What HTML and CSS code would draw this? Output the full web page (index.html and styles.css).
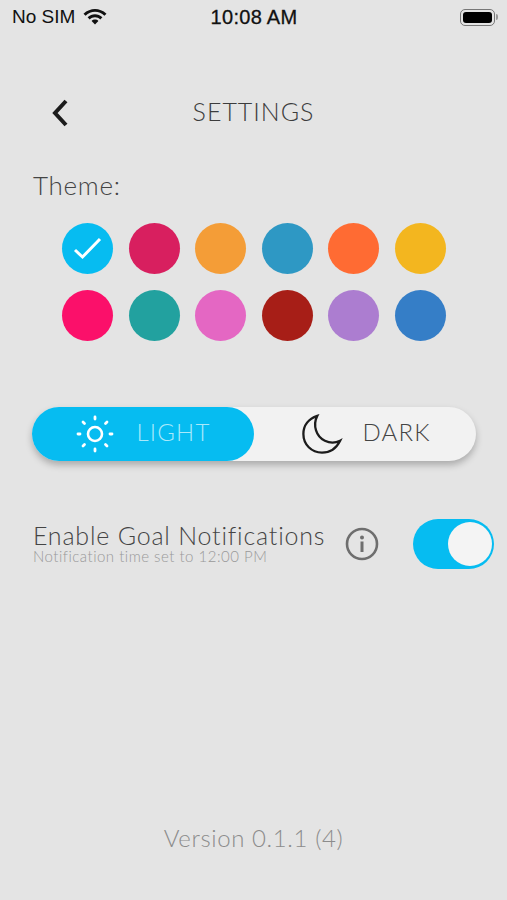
FILE: index.html
```html
<!DOCTYPE html>
<html lang="en">
<head>
    <meta charset="UTF-8">
    <meta name="viewport" content="width=device-width, initial-scale=1.0">
    <title>Settings</title>
    <link rel="stylesheet" href="styles.css">
</head>
<body>
    <div class="page">
        <div class="status-bar">
            <div class="status-left">
                <span>No SIM</span>
                <svg class="wifi" width="24" height="18" viewBox="0 0 24 18">
                    <path d="M12 1C8 1 4 2.500 .5 5.700L2.600 7.800C5.200 5.300 8.500 3.800 12 3.800S18.800 5.300 21.400 7.800L23.500 5.700C20 2.500 16 1 12 1Z"/>
                    <path d="M12 6.300C9.300 6.300 6.800 7.400 4.600 9.300L6.700 11.400C8.200 10 10 9.200 12 9.200S15.800 10 17.300 11.400L19.400 9.300C17.200 7.400 14.700 6.300 12 6.300Z"/>
                    <path d="M12 11.500C10.700 11.500 9.500 12 8.600 12.900L12 16.500L15.400 12.900C14.500 12 13.300 11.500 12 11.500Z"/>
                </svg>
            </div>
            <div class="status-time">10:08 AM</div>
            <div class="status-right">
                <div class="battery"><div class="battery-fill"></div></div>
                <div class="battery-cap"></div>
            </div>
        </div>

        <div class="header">
            <svg class="back" width="20" height="30" viewBox="0 0 20 30">
                <path d="M16 3L5 15L16 27" fill="none" stroke="#1c1c1c" stroke-width="4"/>
            </svg>
            <h1 class="title">SETTINGS</h1>
        </div>

        <p class="theme-label">Theme:</p>
        <div class="swatches">
            <div class="swatch selected">
                <svg width="30" height="26" viewBox="0 0 30 26">
                    <path d="M2 14L9.500 21L27 3" fill="none" stroke="#fff" stroke-width="3"/>
                </svg>
            </div>
            <div class="swatch crimson"></div>
            <div class="swatch amber"></div>
            <div class="swatch ocean"></div>
            <div class="swatch orange"></div>
            <div class="swatch yellow"></div>
            <div class="swatch rose"></div>
            <div class="swatch teal"></div>
            <div class="swatch orchid"></div>
            <div class="swatch brick"></div>
            <div class="swatch violet"></div>
            <div class="swatch blue"></div>
        </div>

        <div class="mode-switch">
            <div class="mode mode-light">
                <svg width="40" height="40" viewBox="0 0 40 40">
                    <circle cx="20" cy="20" r="7" fill="none" stroke="#fff" stroke-width="2.600"/>
                    <g stroke="#fff" stroke-width="2.800" stroke-linecap="round">
                        <path d="M20 3V5"/>
                        <path d="M20 35V37"/>
                        <path d="M3 20H5"/>
                        <path d="M35 20H37"/>
                        <path d="M8 8L9.500 9.500"/>
                        <path d="M30.500 30.500L32 32"/>
                        <path d="M8 32L9.500 30.500"/>
                        <path d="M30.500 9.500L32 8"/>
                    </g>
                </svg>
                <span>LIGHT</span>
            </div>
            <div class="mode mode-dark">
                <svg width="42" height="42" viewBox="0 0 44 44">
                    <path d="M17 3C8 6 2.500 13 2.500 22C2.500 33 11 41.500 22 41.500C30 41.500 37 37 41 29C36 31.500 30 31.500 25 29C16 25 12 13 17 3Z" fill="none" stroke="#1c1c1c" stroke-width="2.400"/>
                </svg>
                <span>DARK</span>
            </div>
        </div>

        <div class="notify-row">
            <div class="notify-text">
                <div class="notify-title">Enable Goal Notifications</div>
                <div class="notify-sub">Notification time set to 12:00 PM</div>
            </div>
            <svg class="info" width="34" height="34" viewBox="0 0 34 34">
                <circle cx="17" cy="17" r="15" fill="none" stroke="#6e6e6e" stroke-width="2.600"/>
                <circle cx="17" cy="10.500" r="2" fill="#6e6e6e"/>
                <rect x="15.500" y="14.500" width="3" height="10.500" fill="#6e6e6e"/>
            </svg>
            <div class="toggle"><div class="knob"></div></div>
        </div>

        <div class="version">Version 0.1.1 (4)</div>
    </div>
</body>
</html>
```
FILE: styles.css
```css
* {
    box-sizing: border-box;
}

body {
    margin: 0;
    background-color: #e4e4e4;
    font-family: Lato, "Open Sans", sans-serif;
    font-weight: 300;
}

.page {
    display: flex;
    flex-direction: column;
    height: 900px;
    overflow: hidden;
}

.status-bar {
    display: grid;
    grid-template-columns: 1fr auto 1fr;
    align-items: center;
    height: 34px;
    padding: 0 9px 0 12px;
    font-family: "Liberation Sans", sans-serif;
    font-size: 19px;
    font-weight: 400;
    color: #111;
}

.status-left {
    display: flex;
    align-items: center;
    gap: 8px;
}

.wifi {
    fill: #111;
}

.status-time {
    margin-right: 2px;
    font-size: 20px;
    letter-spacing: 0.300px;
    -webkit-text-stroke: 0.300px #111;
}

.status-right {
    display: flex;
    justify-content: flex-end;
    align-items: center;
    gap: 1px;
}

.battery {
    width: 35px;
    height: 17px;
    padding: 2px;
    border: 1.500px solid #777;
    border-radius: 5px;
}

.battery-fill {
    height: 100%;
    background-color: #000;
    border-radius: 3px;
}

.battery-cap {
    width: 2px;
    height: 6px;
    background-color: #999;
    border-radius: 0 2px 2px 0;
}

.header {
    display: flex;
    align-items: center;
    justify-content: center;
    position: relative;
    height: 36px;
    margin-top: 59px;
}

.back {
    position: absolute;
    left: 50px;
    top: 5px;
}

.title {
    margin: 0;
    font-size: 25px;
    font-weight: 300;
    letter-spacing: 1px;
    color: #3c3c3c;
}

.theme-label {
    margin: 38px 0 0 33px;
    font-size: 26px;
    letter-spacing: 0.700px;
    line-height: 36px;
    color: #444;
}

.swatches {
    display: grid;
    grid-template-columns: repeat(6, 51px);
    gap: 16px 15.500px;
    margin: 20px 0 0 62px;
}

.swatch {
    display: flex;
    align-items: center;
    justify-content: center;
    height: 51px;
    border-radius: 50%;
}

.selected { background-color: #06bcf1; }
.crimson { background-color: #d81f5f; }
.amber { background-color: #f49d37; }
.ocean { background-color: #2e98c4; }
.orange { background-color: #ff6b33; }
.yellow { background-color: #f3b61f; }
.rose { background-color: #fb106a; }
.teal { background-color: #22a19f; }
.orchid { background-color: #e467c3; }
.brick { background-color: #a71e17; }
.violet { background-color: #ac7dd0; }
.blue { background-color: #357ec7; }

.mode-switch {
    display: flex;
    width: 444px;
    height: 54px;
    margin: 66px 0 0 32px;
    background-color: #f2f2f2;
    border-radius: 27px;
    box-shadow: 0 4px 7px rgba(0, 0, 0, 0.25);
}

.mode {
    display: flex;
    align-items: center;
    justify-content: center;
    width: 222px;
    font-size: 24px;
    letter-spacing: 1.200px;
}

.mode span {
    padding-bottom: 5px;
}

.mode-light {
    gap: 21px;
    background-color: #06bcf1;
    border-radius: 27px;
    color: #a9e9fb;
}

.mode-dark {
    gap: 19px;
    padding-left: 2px;
    color: #444;
}

.notify-row {
    display: flex;
    align-items: center;
    margin: 58px 0 0 33px;
    height: 50px;
}

.notify-text {
    width: 312px;
    padding-bottom: 4px;
}

.notify-title {
    font-size: 25px;
    letter-spacing: 0.800px;
    line-height: 28px;
    color: #444;
}

.notify-sub {
    font-size: 15px;
    letter-spacing: 0.500px;
    line-height: 14px;
    color: #999;
}

.toggle {
    display: flex;
    justify-content: flex-end;
    align-items: center;
    width: 81px;
    height: 50px;
    margin-left: 34px;
    padding-right: 2px;
    background-color: #06bcf1;
    border-radius: 25px;
}

.knob {
    width: 44px;
    height: 44px;
    background-color: #f4f4f4;
    border-radius: 50%;
}

.version {
    margin-top: auto;
    margin-bottom: 44px;
    text-align: center;
    font-size: 24px;
    letter-spacing: 0.600px;
    line-height: 36px;
    color: #8c8c8c;
}
```
